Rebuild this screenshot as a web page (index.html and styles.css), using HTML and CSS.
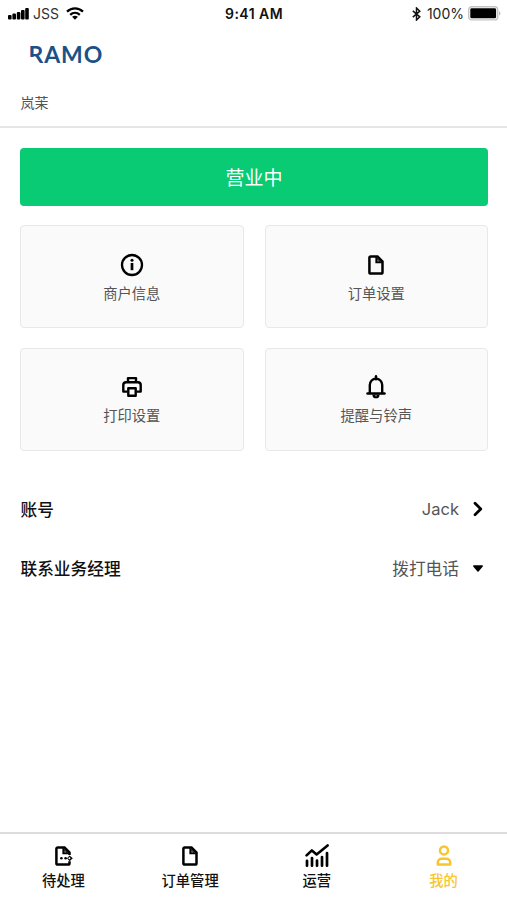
FILE: index.html
```html
<!DOCTYPE html>
<html lang="zh-CN">
<head>
<meta charset="utf-8">
<meta name="viewport" content="width=device-width, initial-scale=1">
<title>RAMO</title>
<link rel="stylesheet" href="styles.css">
</head>
<body>
<div class="app">
  <div class="status">
    <div class="status-left">
      <svg width="22" height="14" viewBox="0 0 22 14"><g fill="#000"><rect x="0" y="8" width="3.6" height="4.6" rx="1"/><rect x="4.4" y="6.6" width="3.6" height="6" rx="1"/><rect x="8.8" y="5" width="3.6" height="7.6" rx="1"/><rect x="13" y="3" width="3.6" height="9.6" rx="1"/><rect x="17.2" y="1" width="3.6" height="11.6" rx="1"/></g></svg>
      <span class="carrier">JSS</span>
      <svg class="wifi" width="18" height="13" viewBox="0 0 18 13"><g fill="none" stroke="#000" stroke-width="2.3"><path d="M1 4.6C5.6.3 12.4.3 17 4.6"/><path d="M4.2 7.8c2.8-2.5 6.8-2.5 9.6 0"/></g><path d="M6.1 9.8c1.8-1.4 4-1.4 5.8 0L9 12.7z"/></svg>
    </div>
    <div class="clock">9:41 AM</div>
    <div class="status-right">
      <svg width="9" height="14" viewBox="0 0 9 14"><path d="M.8 3.9l7 6L4.5 13V1l3.3 3.1-7 6" fill="none" stroke="#111" stroke-width="1.5"/></svg>
      <span class="percent">100%</span>
      <svg width="33" height="15" viewBox="0 0 33 15"><rect x=".7" y=".7" width="29" height="13.2" rx="3" fill="#fff" stroke="#c4c4c4" stroke-width="1.4"/><rect x="2.3" y="2.3" width="25.8" height="10" rx="1.4"/><path d="M31 5.2c2 .8 2 3.4 0 4.2z" fill="#bbb"/></svg>
    </div>
  </div>

  <header class="header">
    <div class="logo"><span class="logo-r">R</span>AMO</div>
    <div class="shop">岚茉</div>
  </header>

  <main class="main">
    <button class="open">营业中</button>
    <div class="grid">
      <div class="card">
        <svg width="24" height="24" viewBox="0 0 24 24"><circle cx="12" cy="12" r="10" fill="none" stroke="#000" stroke-width="2.3"/><path d="M12 10v7.2" stroke="#000" stroke-width="2.7"/><circle cx="12" cy="7.2" r="1.5"/></svg>
        <span>商户信息</span>
      </div>
      <div class="card">
        <svg width="24" height="24" viewBox="0 0 24 24"><path d="M6.8 3.4h6.7l5 5.2v10.6a1.4 1.4 0 0 1-1.4 1.4H6.8a1.4 1.4 0 0 1-1.4-1.4V4.8a1.4 1.4 0 0 1 1.4-1.4z" fill="none" stroke="#000" stroke-width="2.5"/><path d="M11.4 3v7.2h7.1z"/><path d="M13.4 6.2v2.2h2.2z" fill="#888"/></svg>
        <span>订单设置</span>
      </div>
      <div class="card">
        <svg width="24" height="24" viewBox="0 0 24 24"><g fill="none" stroke="#000" stroke-width="2.4" stroke-linejoin="round"><path d="M8 7.2V3.1h8v4.1"/><path d="M7.6 16.6H3.3V10A2.8 2.8 0 0 1 6.1 7.2h11.8a2.8 2.8 0 0 1 2.8 2.8v6.6h-4.3"/><path d="M8.3 13.2h7.4v7.6H8.3z"/></g></svg>
        <span>打印设置</span>
      </div>
      <div class="card">
        <svg width="24" height="24" viewBox="0 0 24 24"><path d="M5.8 18V10a6.2 6.4 0 0 1 12.4 0v8" fill="none" stroke="#000" stroke-width="2.4"/><path d="M12 1.3v3" stroke="#000" stroke-width="2.4" stroke-linecap="round"/><path d="M3.5 18.6h17" stroke="#000" stroke-width="2.5" stroke-linecap="round"/><path d="M8.4 19.4h7.2a3.6 3.9 0 0 1-7.2 0z"/><circle cx="12" cy="20.7" r=".8" fill="#aaa"/></svg>
        <span>提醒与铃声</span>
      </div>
    </div>
    <div class="row">
      <span class="row-title">账号</span>
      <span class="row-value latin">Jack</span>
      <svg width="12" height="16" viewBox="0 0 12 16"><path d="M3 2.2L8.8 8 3 13.8" fill="none" stroke="#000" stroke-width="2.7" stroke-linecap="round" stroke-linejoin="round"/></svg>
    </div>
    <div class="row">
      <span class="row-title">联系业务经理</span>
      <span class="row-value">拨打电话</span>
      <svg width="12" height="16" viewBox="0 0 12 16"><path d="M1.8 6h8.4L6 11z" stroke="#000" stroke-width="1.5" stroke-linejoin="round"/></svg>
    </div>
  </main>

  <nav class="tabs">
    <div class="tab">
      <svg width="24" height="24" viewBox="0 0 24 24"><path d="M18.5 11V8.6l-5-5.2H6.8a1.4 1.4 0 0 0-1.4 1.4v14.4a1.4 1.4 0 0 0 1.4 1.4h10.3a1.4 1.4 0 0 0 1.4-1.4v-2" fill="none" stroke="#000" stroke-width="2.5"/><path d="M11.4 3v7.2h7.1z"/><path d="M13.4 6.2v2.2h2.2z" fill="#888"/><circle cx="10.4" cy="14.3" r="1.3"/><circle cx="14.6" cy="14.3" r="1.3"/><path d="M18.6 11.4l3.2 2.9-3.2 2.9-2.6-2.9z"/><circle cx="18.4" cy="14.3" r="1" fill="#fff"/></svg>
      <span>待处理</span>
    </div>
    <div class="tab">
      <svg width="24" height="24" viewBox="0 0 24 24"><path d="M6.8 3.4h6.7l5 5.2v10.6a1.4 1.4 0 0 1-1.4 1.4H6.8a1.4 1.4 0 0 1-1.4-1.4V4.8a1.4 1.4 0 0 1 1.4-1.4z" fill="none" stroke="#000" stroke-width="2.5"/><path d="M11.4 3v7.2h7.1z"/><path d="M13.4 6.2v2.2h2.2z" fill="#888"/></svg>
      <span>订单管理</span>
    </div>
    <div class="tab">
      <svg width="24" height="24" viewBox="0 0 24 24"><g fill="none" stroke="#000"><path d="M1.6 11.4l5.3-5 4.7 4L22.6 1.4" stroke-width="2.6" stroke-linecap="round" stroke-linejoin="round"/><path d="M2 16.8v4.9M7 14v7.7M12 16.5v5.2M17 13v8.7M22 9v12.7" stroke-width="2.7" stroke-linecap="round"/></g></svg>
      <span>运营</span>
    </div>
    <div class="tab active">
      <svg width="24" height="24" viewBox="0 0 24 24"><g fill="none" stroke="currentColor" stroke-width="2.5"><circle cx="12" cy="6.4" r="4"/><path d="M5.8 20.6v-2a3.8 3.8 0 0 1 3.8-3.8h4.8a3.8 3.8 0 0 1 3.8 3.8v2z" stroke-linejoin="round"/></g></svg>
      <span>我的</span>
    </div>
  </nav>
</div>
</body>
</html>
```
FILE: styles.css
```css
* { box-sizing: border-box; }

body {
  margin: 0;
  background: #fff;
  color: #111;
  font-family: Inter, "Noto Sans CJK SC", sans-serif;
}

svg { display: block; flex: none; }

.app {
  display: flex;
  flex-direction: column;
  height: 900px;
}

.status {
  display: grid;
  grid-template-columns: 1fr auto 1fr;
  align-items: center;
  height: 27px;
  padding: 0 6px 0 8px;
  font-size: 14px;
}

.status-left,
.status-right {
  display: flex;
  align-items: center;
}

.status-right { justify-content: flex-end; }
.carrier { margin-left: 3px; color: #333; }
.wifi { margin-left: 7px; }
.clock { margin-right: 1px; font-size: 14px; font-weight: 600; letter-spacing: 0.45px; }
.percent { margin: 0 4px 0 6px; color: #222; }

.header {
  height: 101px;
  padding: 15px 20px 0 20.5px;
  border-bottom: 2px solid #e6e6e6;
}

.logo {
  height: 26px;
  padding-left: 8px;
  color: #1b5189;
  font-family: Lato, sans-serif;
  font-size: 23px;
  font-weight: 700;
  line-height: 25px;
  letter-spacing: 0.9px;
}

.logo-r {
  position: relative;
}

/* gap in the stem of the R */
.logo-r::after {
  content: "";
  position: absolute;
  left: 0;
  bottom: 4px;
  width: 5px;
  height: 7px;
  background: #fff;
}

.shop {
  margin-top: 25px;
  color: #555;
  font-size: 14px;
  line-height: 20px;
}

.main {
  flex: 1;
  padding: 20px 19px 0 20px;
}

.open {
  display: block;
  width: 100%;
  height: 58px;
  padding: 0;
  border: 0;
  border-radius: 4px;
  background: #08cb73;
  color: #fff;
  font: 400 19px/58px "Noto Sans CJK SC", sans-serif;
}

.grid {
  display: grid;
  grid-template-columns: 1fr 1fr;
  gap: 20px 21px;
  margin-top: 19px;
}

.card {
  display: flex;
  flex-direction: column;
  align-items: center;
  height: 103px;
  padding-top: 27px;
  border: 1px solid #e8e8e8;
  border-radius: 4px;
  background: #fafafa;
  color: #555;
  font-size: 14.3px;
  line-height: 20px;
}

.card:nth-child(n + 3) { padding-top: 26px; }

.card span { margin-top: 7px; }

.row {
  display: flex;
  align-items: center;
  height: 59px;
  padding: 0 4px 0 0.5px;
  font-size: 16.7px;
}

.grid + .row { margin-top: 28px; }
.row-title { flex: 1; font-weight: 500; }
.row-value { margin-right: 13px; color: #555; }
.latin { font-size: 16.5px; }

.tabs {
  display: grid;
  grid-template-columns: repeat(4, 1fr);
  height: 68px;
  border-top: 2px solid #dcdcdc;
}

.tab {
  display: flex;
  flex-direction: column;
  align-items: center;
  padding-top: 10px;
  font-size: 14.3px;
  font-weight: 500;
  line-height: 20px;
}

.tab span { margin-top: 3px; }
.active { color: #f8c62c; }
```
